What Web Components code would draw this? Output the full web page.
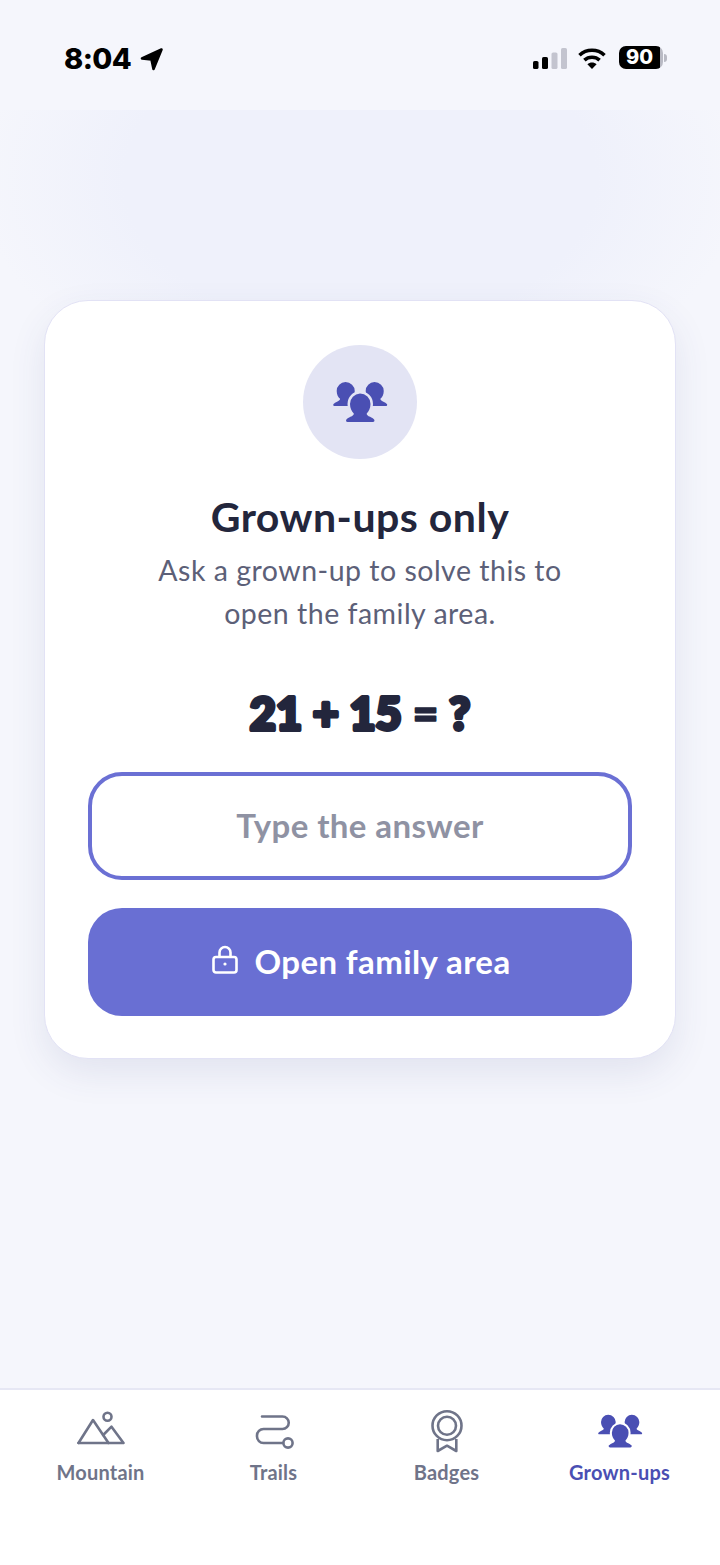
<!DOCTYPE html>
<html lang="en">
<head>
<meta charset="utf-8">
<title>Grown-ups only</title>
<style>
    html, body { margin: 0; padding: 0; }
    body {
        width: 720px;
        height: 1565px;
        overflow: hidden;
        background: #f5f6fc;
        font-family: "Lato", "Noto Sans", sans-serif;
    }
</style>
</head>
<body>
<gate-screen>
    <status-bar slot="status"></status-bar>
    <gate-card slot="main"></gate-card>
    <tab-bar slot="tabs"></tab-bar>
</gate-screen>

<script>
'use strict';

const PERSON = 'M27 12.5a10.5 10.5 0 0 1 10.500 10.500c0 4.400-1.700 7.400-3.800 9.400-.2 1.400 1.200 2.400 3.400 3.400 1.600.8 3.200 1.800 4 2.700.8 1 .2 2.500-1.200 2.500H14.600c-1.400 0-2-1.500-1.200-2.500.8-.9 2.400-1.900 4-2.700 2.200-1 3.600-2 3.400-3.400-2.100-2-3.800-5-3.800-9.400A10.500 10.500 0 0 1 27 12.500z';

class PeopleIcon extends HTMLElement {

    constructor() {
        super();
        this._root = this.attachShadow({ mode: 'open' });
        this._root.innerHTML = `
            <style>
                :host { display: block; color: #4a4fb3; line-height: 0; }
                svg { width: 100%; height: auto; display: block; overflow: visible; }
            </style>
            <svg viewBox="0 0 54 42">
                <g fill="currentColor">
                    <path d="${ PERSON }" transform="translate(12.500 25) scale(.88 .84) translate(-27 -41)" />
                    <path d="${ PERSON }" transform="translate(41.500 25) scale(.88 .84) translate(-27 -41)" />
                    <path d="${ PERSON }" stroke="var(--gap, #fff)" stroke-width="5" paint-order="stroke" />
                </g>
            </svg>`;
    }
}

class StatusBar extends HTMLElement {

    constructor() {
        super();
        this._root = this.attachShadow({ mode: 'open' });
        this._root.innerHTML = `
            <style>
                :host {
                    display: flex;
                    align-items: center;
                    justify-content: space-between;
                    height: 110px;
                    padding: 8px 53px 0 64px;
                    box-sizing: border-box;
                    background: #f5f6fc;
                    font-family: "Inter", "Liberation Sans", sans-serif;
                    color: #000;
                }
                .left, .right { display: flex; align-items: center; }
                .time { font-size: 29px; font-weight: 800; line-height: 34px; letter-spacing: -.6px; }
                .arrow { width: 24px; height: 24px; margin-left: 9px; }
                .signal { width: 34px; height: 21px; margin-top: -2px; }
                .wifi { width: 28px; height: 21px; margin-left: 11px; margin-top: -2px; }
                .battery { display: flex; align-items: center; margin-left: 13px; margin-top: -3px; }
                .cell {
                    width: 44px;
                    height: 23px;
                    border-radius: 7px;
                    background: linear-gradient(to right, #000 41px, #b9bac4 41px);
                    color: #fff;
                    font-size: 20px;
                    font-weight: 800;
                    line-height: 23px;
                    text-align: center;
                    padding-right: 3px;
                    box-sizing: border-box;
                }
                .nub { width: 3px; height: 8px; margin-left: 1px; background: #b9bac4; border-radius: 0 3px 3px 0; }
            </style>
            <div class="left">
                <span class="time">8:04</span>
                <svg class="arrow" viewBox="0 0 24 24"><path d="M21.500 2.500L2 11.500l9.500 1L13.500 22z" fill="#000" stroke="#000" stroke-width="2.600" stroke-linejoin="round" /></svg>
            </div>
            <div class="right">
                <svg class="signal" viewBox="0 0 34 21">
                    <rect x="0" y="13" width="5.5" height="8" rx="1.6" fill="#000" />
                    <rect x="9" y="9" width="6" height="12" rx="1.6" fill="#000" />
                    <rect x="18.5" y="4.5" width="6" height="16.5" rx="1.6" fill="#c3c4cf" />
                    <rect x="28" y="0" width="6" height="21" rx="1.6" fill="#c3c4cf" />
                </svg>
                <svg class="wifi" viewBox="0 0 28 21" fill="none" stroke="#000" stroke-width="3.6">
                    <path d="M1.5 7.2C8.5.6 19.500.6 26.500 7.200" />
                    <path d="M6.400 12.200c4.300-3.900 10.900-3.900 15.200 0" />
                    <path d="M14 21l-4.600-4.700c2.600-2.300 6.600-2.300 9.200 0z" fill="#000" stroke="none" />
                </svg>
                <div class="battery"><div class="cell">90</div><div class="nub"></div></div>
            </div>`;
    }
}

class GateCard extends HTMLElement {

    constructor() {
        super();
        this._root = this.attachShadow({ mode: 'open' });
        this._root.innerHTML = `
            <style>
                :host {
                    display: flex;
                    flex-direction: column;
                    align-items: center;
                    box-sizing: border-box;
                    width: 632px;
                    height: 759px;
                    padding: 44px 43px 0;
                    background: #fff;
                    border: 1px solid #e2e2f5;
                    border-radius: 44px;
                    box-shadow: 0 14px 36px rgba(60, 64, 130, 0.1);
                    text-align: center;
                }
                .avatar {
                    display: flex;
                    align-items: center;
                    justify-content: center;
                    width: 114px;
                    height: 114px;
                    border-radius: 50%;
                    background: #e3e4f4;
                    --gap: #e3e4f4;
                }
                people-icon { width: 54px; }
                h1 {
                    margin: 34px 0 0;
                    font-size: 41px;
                    line-height: 48px;
                    font-weight: 700;
                    letter-spacing: .5px;
                    color: #23263c;
                }
                p {
                    margin: 8px 0 0;
                    font-size: 28.5px;
                    line-height: 43px;
                    letter-spacing: .5px;
                    color: #5c6078;
                }
                .sum { display: block; width: 300px; height: 60px; margin-top: 49px; overflow: visible; }
                .sum text {
                    font-family: "Lato", "Noto Sans", sans-serif;
                    font-size: 45px;
                    font-weight: 900;
                    fill: #23263c;
                    stroke: #23263c;
                    stroke-width: 4px;
                    stroke-linejoin: round;
                    text-anchor: middle;
                }
                .sum .eq { stroke-width: 1.600px; }
                .answer {
                    display: flex;
                    align-items: center;
                    justify-content: center;
                    box-sizing: border-box;
                    width: 544px;
                    height: 108px;
                    margin-top: 28px;
                    padding-bottom: 2px;
                    border: 4px solid #6b70d4;
                    border-radius: 34px;
                    font-size: 33px;
                    font-weight: 700;
                    letter-spacing: .4px;
                    color: #8f92a3;
                }
                .open {
                    display: flex;
                    align-items: center;
                    justify-content: center;
                    box-sizing: border-box;
                    gap: 16px;
                    width: 544px;
                    height: 108px;
                    margin-top: 28px;
                    padding: 0 0 2px 3px;
                    border-radius: 34px;
                    background: #696fd3;
                    font-size: 33px;
                    font-weight: 700;
                    letter-spacing: .4px;
                    color: #fff;
                }
                .open svg { width: 26px; height: 30px; margin-top: -2px; }
            </style>
            <div class="avatar"><people-icon></people-icon></div>
            <h1>Grown-ups only</h1>
            <p>Ask a grown-up to solve this to<br>open the family area.</p>
            <svg class="sum" viewBox="0 0 300 60"><text x="150" y="46">21 + 15 <tspan class="eq">=</tspan> ?</text></svg>
            <div class="answer">Type the answer</div>
            <div class="open">
                <svg viewBox="0 0 26 30" fill="none" stroke="#fff" stroke-width="2.6" stroke-linejoin="round">
                    <rect x="1.500" y="12" width="23" height="15.500" rx="2.500" />
                    <path d="M7.500 12V7.500a5.500 5.500 0 0 1 11 0V12" />
                    <circle cx="13" cy="19" r="1.600" fill="#fff" stroke="none" />
                </svg>
                <span>Open family area</span>
            </div>`;
    }
}

class TabItem extends HTMLElement {

    constructor() {
        super();
        this._root = this.attachShadow({ mode: 'open' });
        this._root.innerHTML = `
            <style>
                :host {
                    display: flex;
                    flex-direction: column;
                    align-items: center;
                    font-size: 20px;
                    font-weight: 700;
                    line-height: 24px;
                    letter-spacing: .2px;
                    color: #6f7489;
                }
                :host([active]) { color: #4a4fb3; }
                .icon { display: flex; align-items: flex-end; justify-content: center; height: 54px; }
                .label { margin-top: 7px; }
            </style>
            <div class="icon"><slot name="icon"></slot></div>
            <div class="label"><slot></slot></div>`;
    }
}

class TabBar extends HTMLElement {

    constructor() {
        super();
        this._root = this.attachShadow({ mode: 'open' });
        this._root.innerHTML = `
            <style>
                :host {
                    display: grid;
                    grid-template-columns: repeat(4, 173px);
                    box-sizing: border-box;
                    height: 177px;
                    padding: 9px 14px 0;
                    background: #fff;
                    border-top: 2px solid #e6e7f4;
                }
                svg { display: block; fill: none; stroke: currentColor; stroke-width: 2.6; stroke-linejoin: round; stroke-linecap: round; }
                people-icon { width: 44px; margin-bottom: 5px; }
            </style>
            <tab-item>
                <svg slot="icon" width="48" height="42" viewBox="0 0 48 42">
                    <path d="M1.500 32L16 9l15.500 23" />
                    <path d="M26.200 24l8.300-8.300L46.500 32H1.500" />
                    <circle cx="30.500" cy="5.700" r="4" />
                </svg>
                Mountain
            </tab-item>
            <tab-item>
                <svg slot="icon" width="40" height="40" viewBox="0 0 40 40">
                    <path d="M8 3.500h20.500a6.250 6.250 0 0 1 0 12.500H9.500A6.500 6.500 0 0 0 3 22.500v1A6.500 6.500 0 0 0 9.500 30H29" />
                    <circle cx="34" cy="30" r="4.600" />
                </svg>
                Trails
            </tab-item>
            <tab-item>
                <svg slot="icon" width="34" height="44" viewBox="0 0 34 44">
                    <circle cx="17" cy="16.700" r="14.500" />
                    <circle cx="17" cy="16.700" r="9" />
                    <path d="M7.700 30v12l9.300-5.300 9.300 5.300V30" stroke-linecap="butt" />
                </svg>
                Badges
            </tab-item>
            <tab-item active>
                <people-icon slot="icon"></people-icon>
                Grown-ups
            </tab-item>`;
    }
}

class GateScreen extends HTMLElement {

    constructor() {
        super();
        this._root = this.attachShadow({ mode: 'open' });
        this._root.innerHTML = `
            <style>
                :host {
                    display: flex;
                    flex-direction: column;
                    position: relative;
                    width: 720px;
                    height: 1565px;
                    background: #f5f6fc;
                    overflow: hidden;
                }
                .glow {
                    position: absolute;
                    left: 0;
                    right: 0;
                    top: 110px;
                    height: 230px;
                    background: radial-gradient(ellipse 380px 240px at 50% 30%, #eff1fb 0%, #eff1fb 62%, rgba(239, 241, 251, 0) 100%);
                }
                main {
                    position: relative;
                    flex: 1;
                    display: flex;
                    justify-content: center;
                    padding-top: 190px;
                }
                ::slotted([slot=status]) { position: relative; }
            </style>
            <div class="glow"></div>
            <slot name="status"></slot>
            <main><slot name="main"></slot></main>
            <slot name="tabs"></slot>`;
    }
}

customElements.define('people-icon', PeopleIcon);
customElements.define('status-bar', StatusBar);
customElements.define('gate-card', GateCard);
customElements.define('tab-item', TabItem);
customElements.define('tab-bar', TabBar);
customElements.define('gate-screen', GateScreen);
</script>
</body>
</html>
